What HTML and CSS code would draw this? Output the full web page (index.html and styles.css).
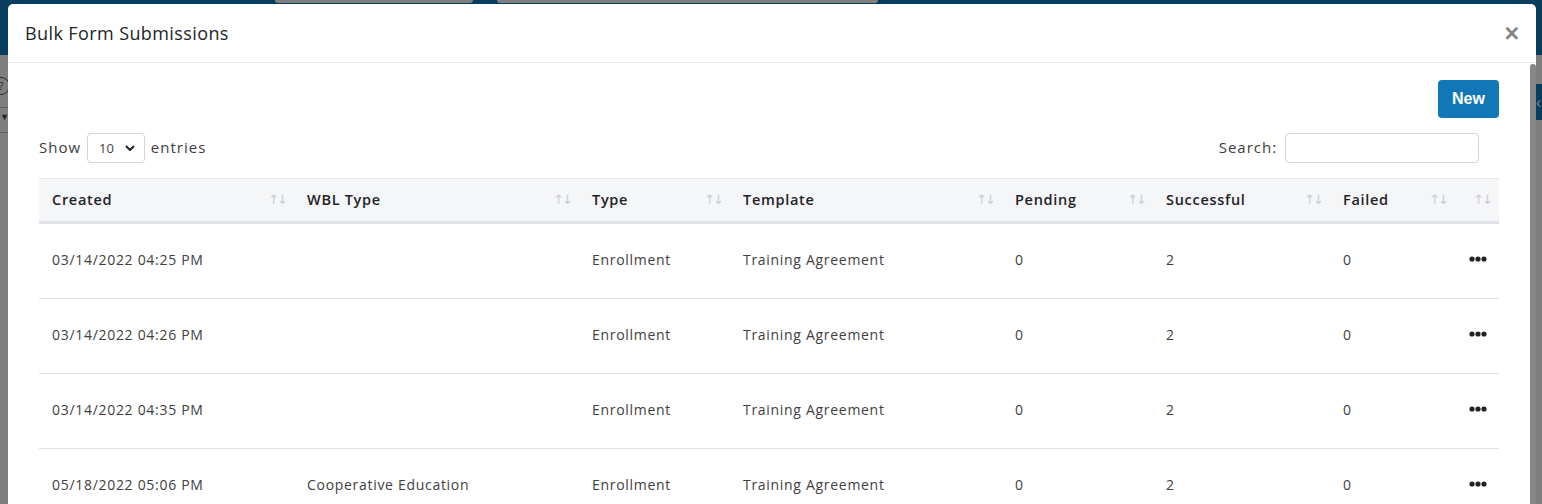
FILE: index.html
```html
<!DOCTYPE html>
<html lang="en">

<head>
    <meta charset="UTF-8">
    <meta name="viewport" content="width=device-width, initial-scale=1.0">
    <title>Bulk Form Submissions</title>
    <link rel="stylesheet" href="styles.css">
</head>

<body>
    <!-- page behind the dialog -->
    <div class="page">
        <header class="topbar">
            <div class="topbar-field field-a"></div>
            <div class="topbar-field field-b"></div>
        </header>
        <div class="workspace">
            <aside class="rail rail-left">
                <span class="rail-help">?</span>
                <span class="rail-caret">&#9660;</span>
            </aside>
            <aside class="rail rail-right">
                <span class="rail-tab">&lsaquo;</span>
            </aside>
        </div>
    </div>

    <div class="backdrop"></div>

    <div class="modal">
        <div class="modal-header">
            <h5 class="modal-title">Bulk Form Submissions</h5>
            <button class="close" type="button">&times;</button>
        </div>

        <div class="modal-body">
            <div class="toolbar">
                <button class="btn-new" type="button">New</button>
            </div>

            <div class="dt-controls">
                <label class="dt-length">Show
                    <select>
                        <option>10</option>
                        <option>25</option>
                        <option>50</option>
                    </select>
                    entries</label>
                <label class="dt-filter">Search: <input type="search"></label>
            </div>

            <table class="dt-table">
                <colgroup>
                    <col style="width: 255px">
                    <col style="width: 285px">
                    <col style="width: 151px">
                    <col style="width: 272px">
                    <col style="width: 151px">
                    <col style="width: 177px">
                    <col style="width: 125px">
                    <col style="width: 44px">
                </colgroup>
                <thead>
                    <tr>
                        <th><div class="th-inner">Created<span class="sort">&uarr;&darr;</span></div></th>
                        <th><div class="th-inner">WBL Type<span class="sort">&uarr;&darr;</span></div></th>
                        <th><div class="th-inner">Type<span class="sort">&uarr;&darr;</span></div></th>
                        <th><div class="th-inner">Template<span class="sort">&uarr;&darr;</span></div></th>
                        <th><div class="th-inner">Pending<span class="sort">&uarr;&darr;</span></div></th>
                        <th><div class="th-inner">Successful<span class="sort">&uarr;&darr;</span></div></th>
                        <th><div class="th-inner">Failed<span class="sort">&uarr;&darr;</span></div></th>
                        <th><div class="th-inner"><span></span><span class="sort">&uarr;&darr;</span></div></th>
                    </tr>
                </thead>
                <tbody id="rows"></tbody>
            </table>
        </div>

        <div class="scroll-thumb"></div>
    </div>

    <script>
        const submissions = [
            { created: '03/14/2022 04:25 PM', wbl: '', type: 'Enrollment', template: 'Training Agreement', pending: 0, ok: 2, failed: 0 },
            { created: '03/14/2022 04:26 PM', wbl: '', type: 'Enrollment', template: 'Training Agreement', pending: 0, ok: 2, failed: 0 },
            { created: '03/14/2022 04:35 PM', wbl: '', type: 'Enrollment', template: 'Training Agreement', pending: 0, ok: 2, failed: 0 },
            { created: '05/18/2022 05:06 PM', wbl: 'Cooperative Education', type: 'Enrollment', template: 'Training Agreement', pending: 0, ok: 2, failed: 0 }
        ];

        const dots = '<svg class="dots" width="18" height="6" viewBox="0 0 18 6">' +
            '<circle cx="3" cy="3" r="2.6"/><circle cx="9" cy="3" r="2.6"/><circle cx="15" cy="3" r="2.6"/></svg>';

        const tbody = document.getElementById('rows');
        submissions.forEach(s => {
            const tr = document.createElement('tr');
            tr.innerHTML = `<td>${s.created}</td><td>${s.wbl}</td><td>${s.type}</td><td>${s.template}</td>` +
                `<td>${s.pending}</td><td>${s.ok}</td><td>${s.failed}</td><td>${dots}</td>`;
            tbody.appendChild(tr);
        });
    </script>
</body>

</html>
```

FILE: styles.css
```css
html,
body {
    margin: 0;
    height: 100%;
    overflow: hidden;
}

body {
    font-family: "Open Sans", sans-serif;
    background-color: #ffffff;
}

/* page behind the dialog */
.page {
    height: 100%;
    display: flex;
    flex-direction: column;
}

.topbar {
    height: 55px;
    flex-shrink: 0;
    background-color: #137abd;
    display: flex;
    gap: 24px;
    padding-left: 275px;
}

.topbar-field {
    height: 3px;
    background-color: #ffffff;
    border-radius: 0 0 4px 4px;
}

.field-a {
    width: 198px;
}

.field-b {
    width: 381px;
}

.workspace {
    flex: 1;
    display: flex;
    justify-content: space-between;
}

.rail {
    width: 10px;
    display: flex;
    flex-direction: column;
}

.rail-left {
    padding-top: 22px;
    border-right: 1px solid #eeeeee;
}

.rail-help {
    width: 16px;
    height: 16px;
    margin-left: -8px;
    border: 1px solid #555;
    border-radius: 50%;
    font-size: 11px;
    line-height: 16px;
    text-align: center;
    color: #555;
}

.rail-caret {
    margin-top: 12px;
    padding: 2px 0 9px;
    border-top: 1px solid #bbb;
    border-bottom: 1px solid #bbb;
    font-size: 9px;
    color: #444;
}

.rail-right {
    width: 6px;
    padding-top: 29px;
}

.rail-tab {
    height: 36px;
    background-color: #137abd;
    color: #fff;
    font-size: 16px;
    line-height: 36px;
}

.backdrop {
    position: fixed;
    inset: 0;
    background-color: rgba(0, 0, 0, 0.5);
}

/* dialog */
.modal {
    position: absolute;
    top: 4px;
    left: 8px;
    width: 1528px;
    bottom: -40px;
    background-color: #fff;
    border-radius: 5px 5px 0 0;
    overflow: hidden;
}

.modal-header {
    height: 59px;
    box-sizing: border-box;
    padding: 0 17px;
    display: flex;
    align-items: center;
    justify-content: space-between;
    border-bottom: 1px solid #e9e9e9;
}

.modal-title {
    margin: 0;
    font-size: 18px;
    font-weight: 500;
    letter-spacing: 0.4px;
    color: #212529;
}

.close {
    border: none;
    background: none;
    padding: 0;
    font-family: "Liberation Sans", sans-serif;
    font-size: 25px;
    font-weight: bold;
    color: #858585;
    line-height: 1;
    cursor: pointer;
}

.modal-body {
    padding: 17px 37px 0 31px;
}

.toolbar {
    display: flex;
    justify-content: flex-end;
}

.btn-new {
    width: 61px;
    height: 38px;
    border: none;
    border-radius: 4px;
    background-color: #1177b7;
    color: #fff;
    font-family: "Liberation Sans", sans-serif;
    font-size: 16px;
    font-weight: bold;
    cursor: pointer;
}

.dt-controls {
    margin-top: 15px;
    display: flex;
    justify-content: space-between;
    align-items: center;
    padding-right: 20px;
    font-size: 15px;
    letter-spacing: 1px;
    color: #3d3d3d;
}

.dt-length select {
    width: 58px;
    height: 30px;
    margin: 0 1px;
    padding: 0 0 0 11px;
    border: 1px solid #d5d5d5;
    border-radius: 4px;
    font-family: inherit;
    font-size: 13px;
    color: #444;
    background: #fff url("data:image/svg+xml,%3Csvg xmlns='http://www.w3.org/2000/svg' width='10' height='6' viewBox='0 0 10 6'%3E%3Cpath d='M1 1l4 4 4-4' fill='none' stroke='%23222' stroke-width='2'/%3E%3C/svg%3E") no-repeat right 9px center;
    appearance: none;
}

.dt-filter input {
    width: 194px;
    height: 30px;
    box-sizing: border-box;
    margin-left: 3px;
    border: 1px solid #d5d5d5;
    border-radius: 4px;
}

/* table */
.dt-table {
    margin-top: 15px;
    width: 1460px;
    table-layout: fixed;
    border-collapse: collapse;
    font-size: 14px;
    letter-spacing: 0.7px;
}

.dt-table th {
    height: 40px;
    padding: 0 0 2px 13px;
    background-color: #f5f6f8;
    border-top: 1px solid #e3e6ea;
    border-bottom: 3px solid #dee2e6;
    text-align: left;
    font-weight: 600;
    font-size: 14.5px;
    color: #1f2327;
}

.th-inner {
    display: flex;
    justify-content: space-between;
    align-items: center;
    padding-right: 6px;
}

.sort {
    font-family: "DejaVu Sans", sans-serif;
    font-size: 13px;
    font-weight: normal;
    letter-spacing: -2px;
    color: #c9ccd0;
    padding-right: 2px;
}

.dt-table td {
    height: 70px;
    padding: 0 0 4px 13px;
    border-bottom: 1px solid #dee2e6;
    color: #404040;
    white-space: nowrap;
}

.dots {
    display: block;
    margin-left: 1px;
    fill: #222;
}

.scroll-thumb {
    position: absolute;
    top: 60px;
    right: 0;
    bottom: 0;
    width: 6px;
    background-color: #868686;
    border-radius: 3px 3px 0 0;
}
```
